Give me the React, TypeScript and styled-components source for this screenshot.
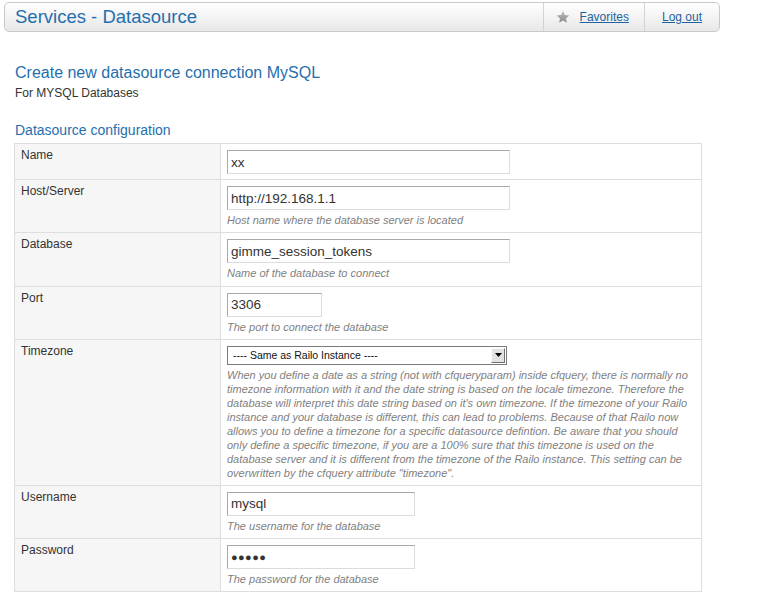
import React from "react";
import styled, { createGlobalStyle } from "styled-components";

const Global = createGlobalStyle`
  html, body { margin: 0; padding: 0; background: #fff; }
  body { font-family: "Liberation Sans", Arial, sans-serif; color: #333; }
`;

const Page = styled.div`
  width: 716px;
  padding: 2px 0 0 4px;
`;

const Header = styled.header`
  display: flex;
  align-items: stretch;
  height: 28px;
  border: 1px solid #c9c9c9;
  border-radius: 5px;
  background: linear-gradient(#ffffff, #e8e8e8);
`;

const Title = styled.h1`
  flex: 1;
  margin: 0;
  padding-left: 10px;
  font-size: 18.5px;
  font-weight: normal;
  line-height: 28px;
  color: #1f6fae;
`;

const NavItem = styled.div<{ $pl: number; $pr: number }>`
  display: flex;
  align-items: flex-start;
  gap: 10px;
  padding: 7px ${(p) => p.$pr}px 0 ${(p) => p.$pl}px;
  border-left: 1px solid #d3d3d3;
`;

const NavLink = styled.a`
  font-size: 12px;
  line-height: 14px;
  color: #1d63a0;
  text-decoration: underline;
  cursor: pointer;
`;

const StarIcon = styled.svg`
  flex: none;
`;

const Content = styled.main`
  padding: 32px 0 0 11px;
`;

const PageTitle = styled.h2`
  margin: 0;
  font-size: 16px;
  line-height: 18px;
  font-weight: normal;
  color: #1f6fae;
`;

const SubTitle = styled.p`
  margin: 4px 0 0;
  font-size: 12px;
  line-height: 14px;
  color: #333;
`;

const SectionTitle = styled.h3`
  margin: 22px 0 5px;
  font-size: 14px;
  line-height: 16px;
  font-weight: normal;
  color: #1f6fae;
`;

const Table = styled.table`
  border-collapse: collapse;
  table-layout: fixed;
  width: 688px;
  margin-left: -1px;
`;

const Label = styled.th`
  width: 193px;
  text-align: left;
  vertical-align: top;
  font-weight: normal;
  font-size: 12px;
  line-height: 14px;
  padding: 4px 6px;
  background: #f6f6f6;
  border: 1px solid #dedede;
  color: #333;
`;

const Value = styled.td`
  vertical-align: top;
  padding: 6px 6px 5px;
  border: 1px solid #dedede;
  background: #fff;
`;

const TextInput = styled.input<{ $w: number; $dots?: boolean }>`
  display: block;
  box-sizing: border-box;
  width: ${(p) => p.$w}px;
  height: 24px;
  margin: 0;
  padding: 0 3px;
  border: 1px solid;
  border-color: #a8a8a8 #dcdcdc #dcdcdc #a8a8a8;
  font-family: "Liberation Sans", Arial, sans-serif;
  font-size: ${(p) => (p.$dots ? "11px" : "13.5px")};
  letter-spacing: ${(p) => (p.$dots ? "0.4px" : "normal")};
  color: #333;
  background: #fff;
  outline: none;
`;

const Help = styled.div<{ $lh?: number }>`
  margin-top: 3px;
  font-size: 11px;
  line-height: ${(p) => p.$lh ?? 14.3}px;
  font-style: italic;
  color: #7f7f7f;
`;

const SelectBox = styled.div`
  display: flex;
  align-items: center;
  box-sizing: border-box;
  width: 280px;
  height: 19px;
  border: 1px solid #7a7a7a;
  background: #fff;
`;

const SelectText = styled.span`
  flex: 1;
  padding-left: 5px;
  font-size: 10.5px;
  color: #111;
  white-space: nowrap;
`;

const SelectButton = styled.span`
  display: flex;
  align-items: center;
  justify-content: center;
  box-sizing: border-box;
  width: 14px;
  height: 15px;
  margin-right: 1px;
  background: #e2e2e2;
  border: 1px solid;
  border-color: #fafafa #707070 #707070 #fafafa;
`;

type Field = {
  label: string;
  value: string;
  width: number;
  help?: string;
  dots?: boolean;
};

const fields1: Field[] = [
  { label: "Name", value: "xx", width: 283 },
  {
    label: "Host/Server",
    value: "http://192.168.1.1",
    width: 283,
    help: "Host name where the database server is located",
  },
  {
    label: "Database",
    value: "gimme_session_tokens",
    width: 283,
    help: "Name of the database to connect",
  },
  { label: "Port", value: "3306", width: 95, help: "The port to connect the database" },
];

const fields2: Field[] = [
  { label: "Username", value: "mysql", width: 188, help: "The username for the database" },
  {
    label: "Password",
    value: "●●●●●",
    width: 188,
    help: "The password for the database",
    dots: true,
  },
];

const timezoneHelp =
  'When you define a date as a string (not with cfqueryparam) inside cfquery, there is normally no timezone information with it and the date string is based on the locale timezone. Therefore the database will interpret this date string based on it\'s own timezone. If the timezone of your Railo instance and your database is different, this can lead to problems. Because of that Railo now allows you to define a timezone for a specific datasource defintion. Be aware that you should only define a specific timezone, if you are a 100% sure that this timezone is used on the database server and it is different from the timezone of the Railo instance. This setting can be overwritten by the cfquery attribute "timezone".';

const FieldRow = ({ f }: { f: Field }) => (
  <tr>
    <Label>{f.label}</Label>
    <Value>
      <TextInput $w={f.width} $dots={f.dots} defaultValue={f.value} readOnly />
      {f.help && <Help>{f.help}</Help>}
    </Value>
  </tr>
);

export default function App() {
  return (
    <>
      <Global />
      <Page>
        <Header>
          <Title>Services - Datasource</Title>
          <NavItem $pl={12} $pr={15}>
            <StarIcon width="14" height="14" viewBox="0 0 24 24">
              <defs>
                <linearGradient id="sg" x1="0" y1="0" x2="0" y2="1">
                  <stop offset="0" stopColor="#bcbcbc" />
                  <stop offset="1" stopColor="#8c8c8c" />
                </linearGradient>
              </defs>
              <path
                d="M12 1.5l3.2 7 7.6.8-5.7 5.1 1.6 7.5L12 18l-6.7 3.9 1.6-7.5L1.2 9.3l7.6-.8z"
                fill="url(#sg)"
              />
            </StarIcon>
            <NavLink>Favorites</NavLink>
          </NavItem>
          <NavItem $pl={17} $pr={17}>
            <NavLink>Log out</NavLink>
          </NavItem>
        </Header>
        <Content>
          <PageTitle>Create new datasource connection MySQL</PageTitle>
          <SubTitle>For MYSQL Databases</SubTitle>
          <SectionTitle>Datasource configuration</SectionTitle>
          <Table>
            <tbody>
              {fields1.map((f) => (
                <FieldRow key={f.label} f={f} />
              ))}
              <tr>
                <Label>Timezone</Label>
                <Value>
                  <SelectBox>
                    <SelectText>---- Same as Railo Instance ----</SelectText>
                    <SelectButton>
                      <svg width="7" height="4" viewBox="0 0 7 4">
                        <path d="M0 0h7L3.5 4z" fill="#000" />
                      </svg>
                    </SelectButton>
                  </SelectBox>
                  <Help $lh={14}>{timezoneHelp}</Help>
                </Value>
              </tr>
              {fields2.map((f) => (
                <FieldRow key={f.label} f={f} />
              ))}
            </tbody>
          </Table>
        </Content>
      </Page>
    </>
  );
}
